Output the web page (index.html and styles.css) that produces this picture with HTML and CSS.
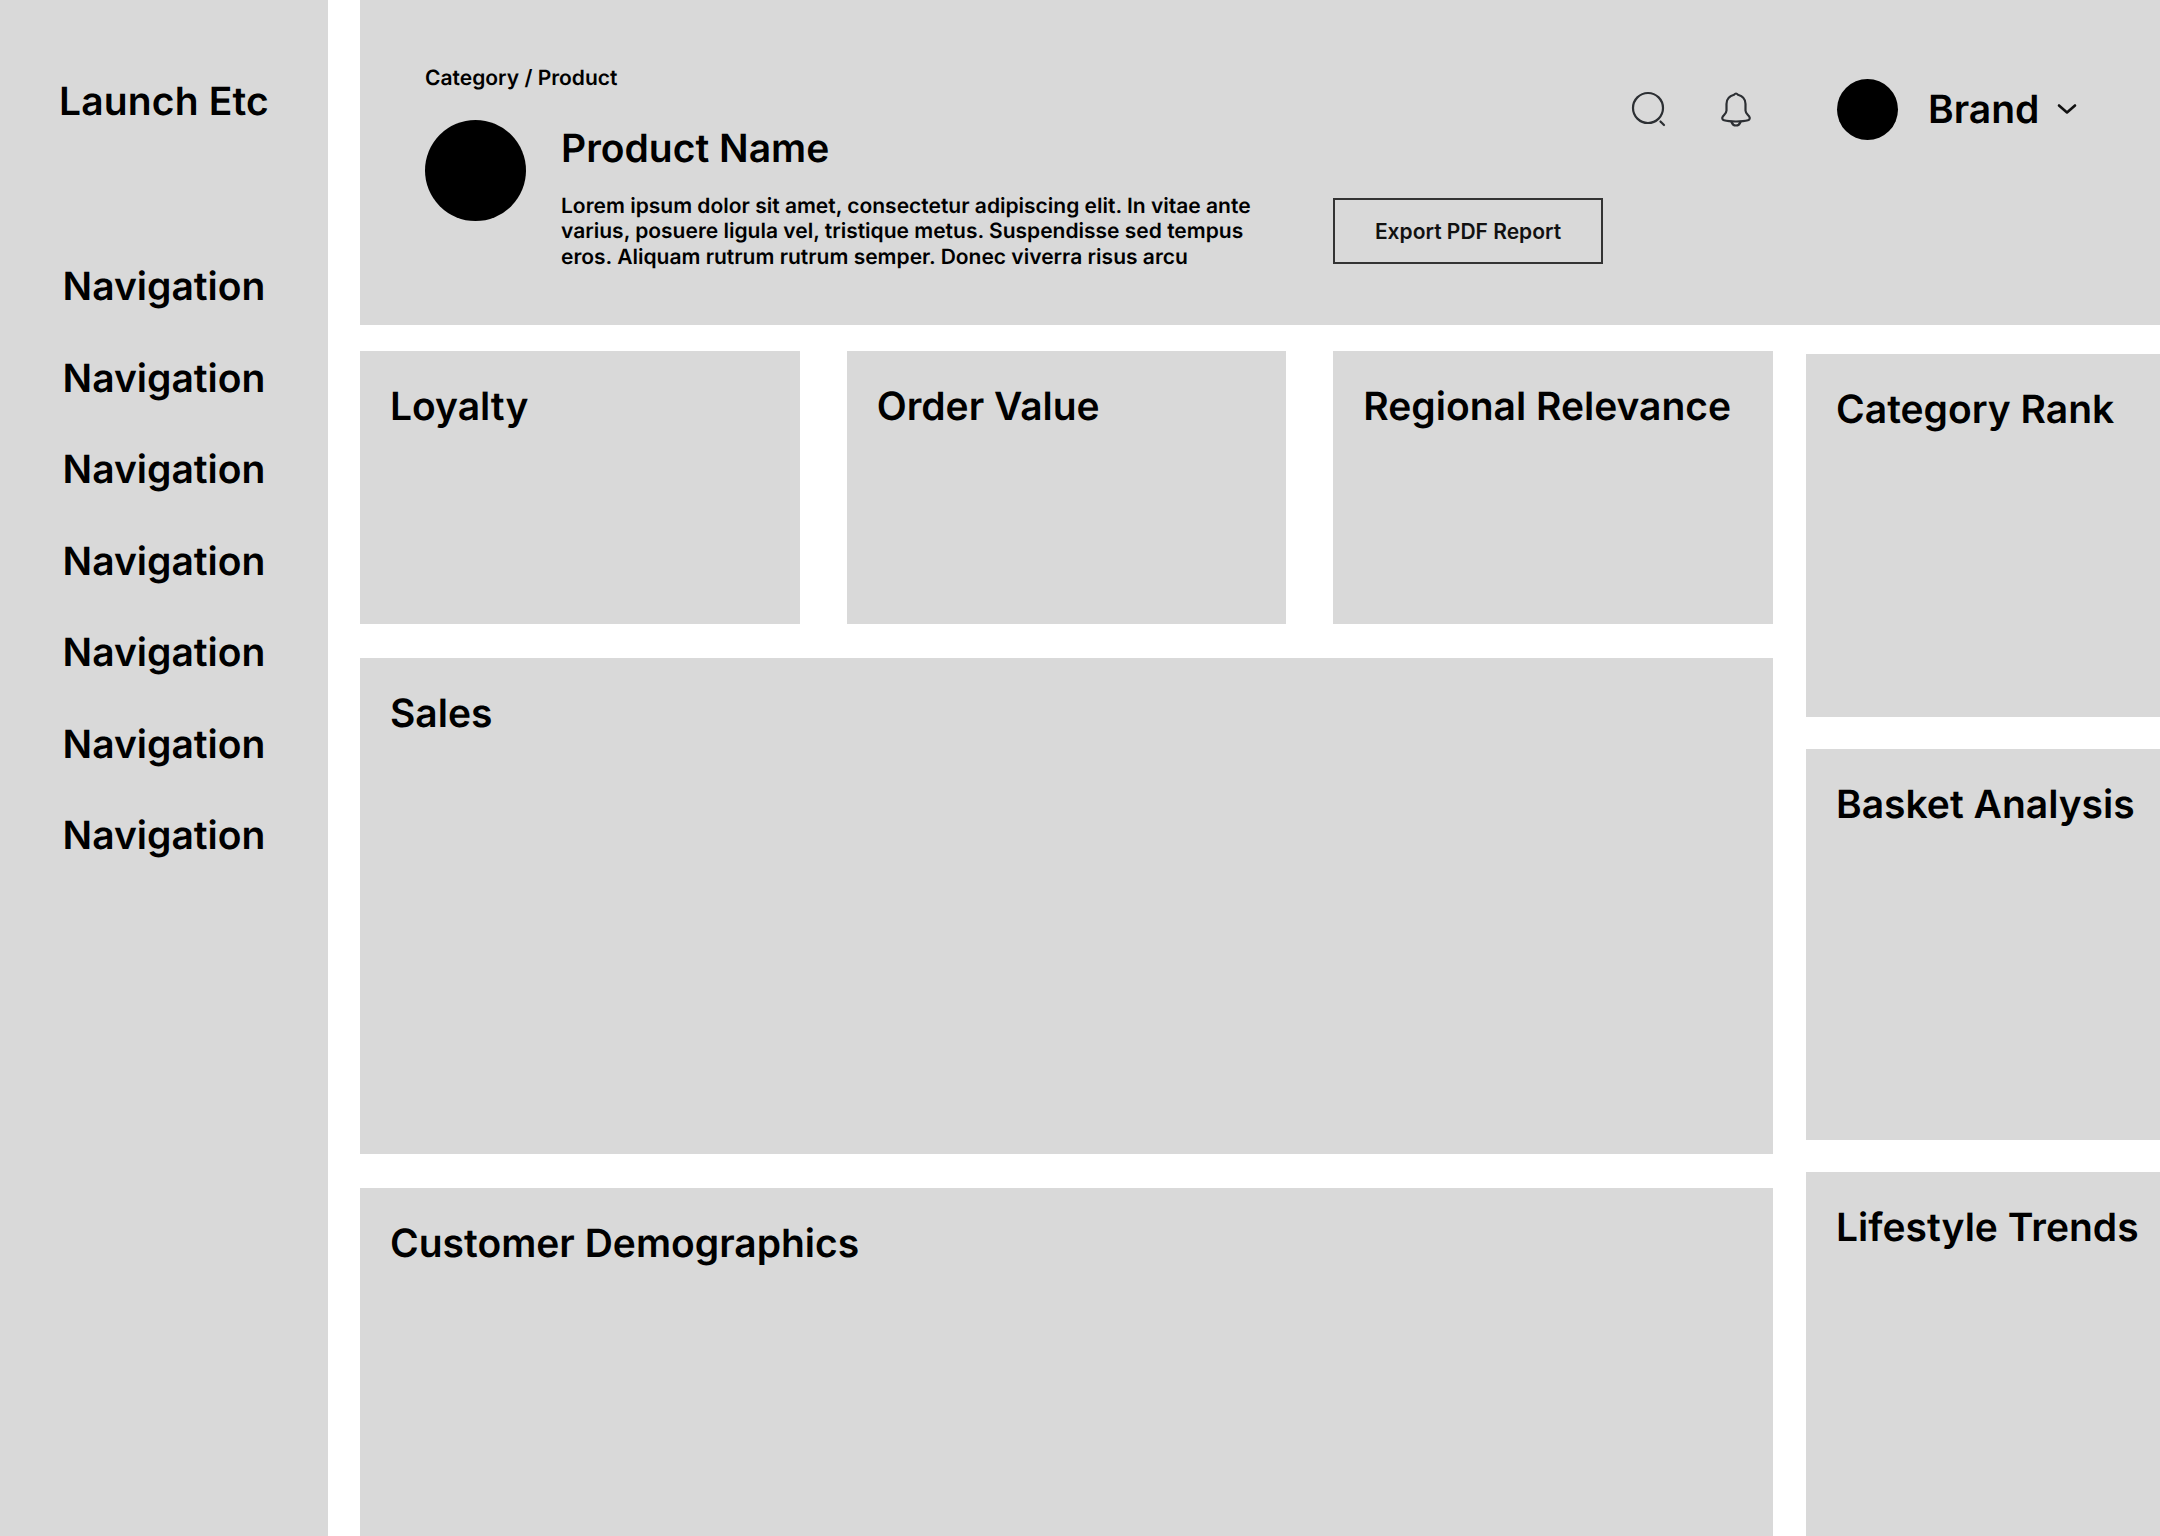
FILE: index.html
```html
<!DOCTYPE html>
<html lang="en">
<head>
<meta charset="utf-8">
<title>Launch Etc</title>
<link rel="stylesheet" href="styles.css">
</head>
<body>
<aside class="sidebar">
  <div class="logo">Launch Etc</div>
  <nav class="nav">
    <a>Navigation</a>
    <a>Navigation</a>
    <a>Navigation</a>
    <a>Navigation</a>
    <a>Navigation</a>
    <a>Navigation</a>
    <a>Navigation</a>
  </nav>
</aside>
<main class="main">
  <header class="header">
    <div class="header-left">
      <div class="crumb">Category / Product</div>
      <div class="product">
        <div class="product-dot"></div>
        <div class="product-text">
          <h1 class="product-name">Product Name</h1>
          <p class="product-desc">Lorem ipsum dolor sit amet, consectetur adipiscing elit. In vitae ante varius, posuere ligula vel, tristique metus. Suspendisse sed tempus eros. Aliquam rutrum rutrum semper. Donec viverra risus arcu</p>
        </div>
        <button class="export">Export PDF Report</button>
      </div>
    </div>
    <div class="actions">
      <svg class="icon icon-search" viewBox="0 0 36 36" fill="none" stroke="#2c2f33" stroke-width="2.2" stroke-linecap="round"><circle cx="17" cy="17" r="15"/><path d="M29.5 30.5l3.5 3.5"/></svg>
      <svg class="icon icon-bell" viewBox="0 0 32 36" fill="none" stroke="#2c2f33" stroke-width="2.2" stroke-linejoin="round" stroke-linecap="round"><path d="M16 2.5c-1 0-1.5.7-2 1.3C9.500 5 6.500 8.500 6.500 13v6.500c0 2.500-2.200 4-3.700 6-1 1.500-.6 3.300 1.200 3.800 3.500 1 7.500 1.200 12 1.200s8.500-.2 12-1.200c1.800-.5 2.200-2.300 1.200-3.800-1.500-2-3.700-3.500-3.700-6V13c0-4.500-3-8-7.500-9.200-.5-.6-1-1.300-2-1.300z"/><path d="M11.500 31c.8 2.200 2.500 3.500 4.500 3.500s3.700-1.300 4.500-3.500"/></svg>
      <div class="avatar"></div>
      <span class="brand">Brand</span>
      <svg class="icon-chevron" viewBox="0 0 20 12" fill="none" stroke="#111" stroke-width="2.6" stroke-linecap="round" stroke-linejoin="round"><path d="M2 2.500l8 7 8-7"/></svg>
    </div>
  </header>
  <div class="content">
    <div class="left-col">
      <div class="kpis">
        <section class="card kpi"><h2>Loyalty</h2></section>
        <section class="card kpi"><h2>Order Value</h2></section>
        <section class="card kpi"><h2>Regional Relevance</h2></section>
      </div>
      <section class="card sales"><h2>Sales</h2></section>
      <section class="card demo"><h2>Customer Demographics</h2></section>
    </div>
    <div class="right-col">
      <section class="card rank"><h2>Category Rank</h2></section>
      <section class="card basket"><h2>Basket Analysis</h2></section>
      <section class="card trends"><h2>Lifestyle Trends</h2></section>
    </div>
  </div>
</main>
</body>
</html>
```
FILE: styles.css
```css
* { box-sizing: border-box; }
html, body { margin: 0; padding: 0; }
body {
  width: 2160px;
  height: 1536px;
  overflow: hidden;
  display: flex;
  gap: 32px;
  background: #fff;
  color: #000;
  font-family: Inter, "Liberation Sans", sans-serif;
  text-rendering: geometricPrecision;
}
.sidebar {
  flex: 0 0 328px;
  background: #d9d9d9;
  padding-top: 77px;
  text-align: center;
}
.logo {
  font-size: 39px;
  font-weight: 600;
  line-height: 50px;
  letter-spacing: 0.150px;
}
.nav {
  margin-top: 135px;
  display: flex;
  flex-direction: column;
  gap: 41.500px;
}
.nav a {
  font-size: 39px;
  font-weight: 600;
  line-height: 50px;
}
.main {
  flex: 1 1 0;
  min-width: 0;
  display: flex;
  flex-direction: column;
}
.header {
  flex: 0 0 325px;
  background: #d9d9d9;
  padding: 64px 0 0 65px;
  display: flex;
}
.crumb {
  font-size: 21px;
  font-weight: 600;
  line-height: 30px;
}
.product {
  margin-top: 26px;
  display: flex;
  align-items: flex-start;
}
.product-dot {
  flex: 0 0 101px;
  height: 101px;
  border-radius: 50%;
  background: #000;
}
.product-text {
  margin-left: 35px;
  width: 772px;
}
.product-name {
  margin: 4px 0 0;
  font-size: 39px;
  font-weight: 600;
  line-height: 50px;
}
.product-desc {
  margin: 20px 0 0;
  width: 700px;
  font-size: 21px;
  font-weight: 600;
  line-height: 25.400px;
}
.export {
  margin-top: 78px;
  flex: 0 0 270px;
  height: 66px;
  padding: 0;
  background: transparent;
  border: 2px solid #333;
  border-radius: 0;
  color: #111;
  font-family: inherit;
  font-size: 21px;
  font-weight: 600;
}
.actions {
  margin: 14px 0 0 28px;
  height: 62px;
  display: flex;
  align-items: center;
}
.icon-search { width: 36px; height: 36px; }
.icon-bell { width: 32px; height: 36px; margin-left: 53px; }
.avatar {
  flex: 0 0 61px;
  height: 61px;
  margin-left: 85px;
  border-radius: 50%;
  background: #000;
}
.brand {
  margin-left: 30px;
  padding-top: 2px;
  font-size: 39px;
  font-weight: 600;
  line-height: 50px;
}
.icon-chevron { width: 20px; height: 12px; margin-left: 18px; }
.content {
  margin-top: 26px;
  display: flex;
  gap: 33px;
  align-items: flex-start;
}
.left-col {
  flex: 0 0 1413px;
  display: flex;
  flex-direction: column;
  gap: 34px;
}
.kpis {
  display: grid;
  grid-template-columns: repeat(3, 1fr);
  gap: 47px;
}
.card {
  background: #d9d9d9;
  padding: 31px 30px 30px;
}
.card h2 {
  margin: 0;
  font-size: 39px;
  font-weight: 600;
  line-height: 50px;
  white-space: nowrap;
}
.kpi { height: 273px; }
.sales { height: 496px; }
.demo { height: 400px; }
.right-col {
  flex: 0 0 420px;
  margin-top: 3px;
  display: flex;
  flex-direction: column;
  gap: 32px;
}
.rank { height: 363px; }
.basket { height: 391px; }
.trends { height: 400px; }
```
